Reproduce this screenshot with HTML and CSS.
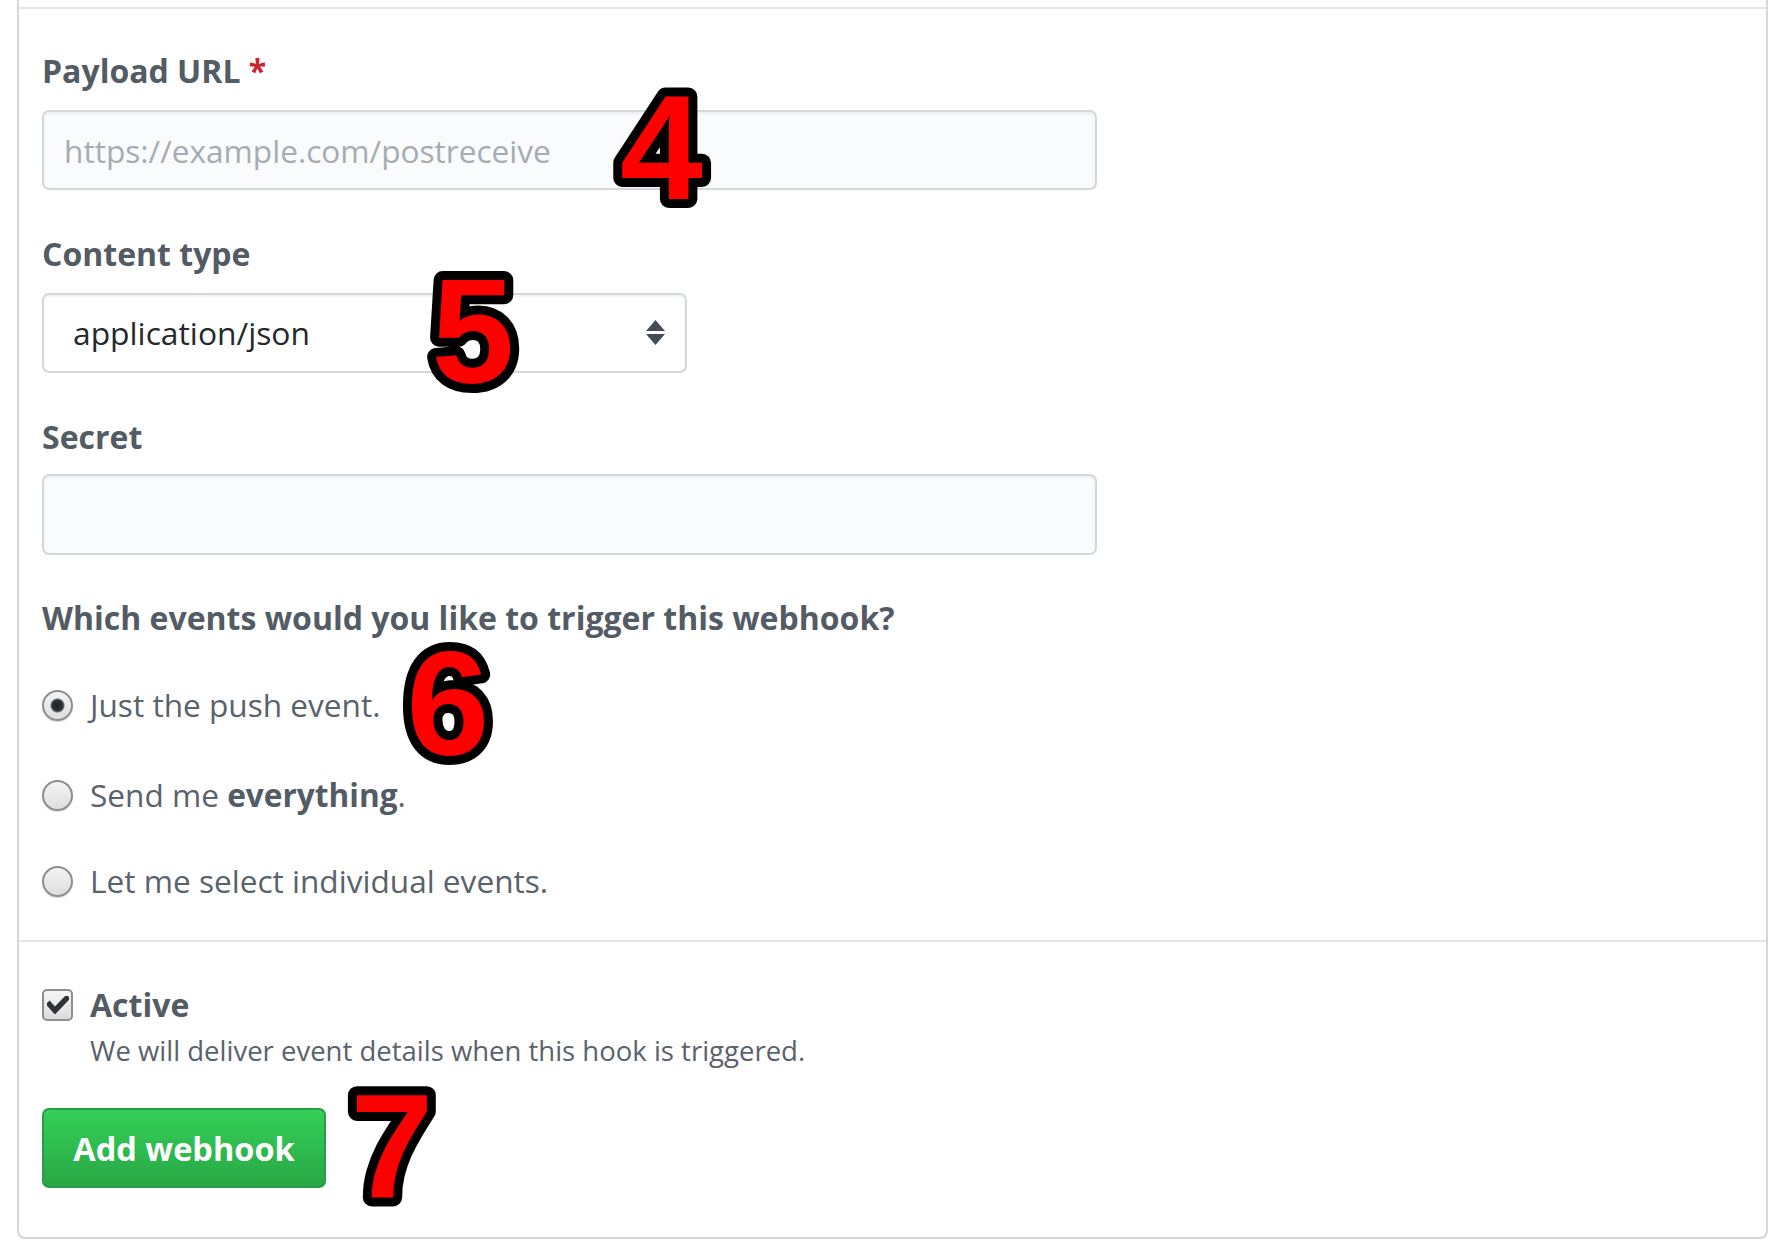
FILE: index.html
```html
<!DOCTYPE html>
<html lang="en">
<head>
<meta charset="utf-8">
<title>Add webhook</title>
<link rel="stylesheet" href="styles.css">
</head>
<body>
<div class="page">
  <div class="box">
    <div class="prev"></div>
    <div class="section main">
      <div class="field">
        <label class="label">Payload URL <span class="req">*</span></label>
        <input class="input" type="text" placeholder="https://example.com/postreceive">
      </div>
      <div class="field">
        <label class="label">Content type</label>
        <div class="select">
          <span class="select-value">application/json</span>
          <svg class="select-arrows" width="19" height="25" viewBox="0 0 19 25">
            <path d="M9.5 0 L19 11 L0 11 Z" fill="#444d56"/>
            <path d="M0 14 L19 14 L9.5 25 Z" fill="#444d56"/>
          </svg>
        </div>
      </div>
      <div class="field">
        <label class="label">Secret</label>
        <input class="input secret" type="text">
      </div>
      <h3 class="label heading">Which events would you like to trigger this webhook?</h3>
      <div class="option opt1">
        <span class="radio checked"></span>
        <span class="option-text">Just the push event.</span>
      </div>
      <div class="option opt2">
        <span class="radio"></span>
        <span class="option-text">Send me <strong>everything</strong>.</span>
      </div>
      <div class="option opt3">
        <span class="radio"></span>
        <span class="option-text">Let me select individual events.</span>
      </div>
    </div>
    <div class="section footer">
      <div class="option active-row">
        <span class="checkbox">
          <svg width="22" height="18" viewBox="0 0 22 18"><path d="M2.5 8.5 L8 14.5 L19.5 2.5" fill="none" stroke="#2f3338" stroke-width="5.5" stroke-linecap="square"/></svg>
        </span>
        <span class="label">Active</span>
      </div>
      <p class="note">We will deliver event details when this hook is triggered.</p>
      <button class="btn" type="button">Add webhook</button>
    </div>
  </div>
  <svg class="marks" width="1792" height="1254" viewBox="0 0 1792 1254">
    <g class="mark">
      <text x="661.5" y="199">4</text>
      <text x="473" y="383">5</text>
      <text x="448" y="755">6</text>
      <text x="392" y="1198">7</text>
    </g>
  </svg>
</div>
</body>
</html>
```
FILE: styles.css
```css
html, body {
  margin: 0;
  padding: 0;
  background: #ffffff;
}

body {
  font-family: "Open Sans", "Noto Sans", sans-serif;
  color: #5a626b;
}

.page {
  position: relative;
  width: 1792px;
  height: 1254px;
  overflow: hidden;
}

.box {
  margin-left: 17px;
  width: 1751px;
  box-sizing: border-box;
  border: 2px solid #d3d6da;
  border-top: none;
  border-radius: 0 0 8px 8px;
}

.prev {
  height: 7px;
  border-bottom: 2px solid #e3e5e8;
}

.section {
  padding-left: 23px;
  padding-right: 23px;
}

.main {
  padding-top: 40px;
  padding-bottom: 37px;
}

.field {
  display: flex;
  flex-direction: column;
  align-items: flex-start;
  margin-bottom: 42px;
}

.label {
  display: block;
  margin: 0;
  font-size: 32px;
  line-height: 44px;
  font-weight: 700;
  color: #535b64;
}

.req {
  color: #cb2431;
}

.input {
  margin-top: 17px;
  width: 1055px;
  height: 80px;
  box-sizing: border-box;
  padding: 0 20px;
  border: 2px solid #d4d7db;
  border-radius: 7px;
  background: #fafbfc;
  box-shadow: inset 0 2px 3px rgba(27, 31, 35, 0.06);
  font-family: "Open Sans", "Noto Sans", sans-serif;
  font-size: 31.6px;
  color: #24292e;
  outline: none;
}

.input::placeholder {
  color: #a6acb3;
}

.secret {
  margin-top: 15px;
  height: 81px;
}

.select {
  margin-top: 17px;
  width: 645px;
  height: 80px;
  box-sizing: border-box;
  padding: 0 20px 0 29px;
  border: 2px solid #d4d7db;
  border-radius: 7px;
  background: #ffffff;
  box-shadow: inset 0 2px 3px rgba(27, 31, 35, 0.05);
  display: flex;
  align-items: center;
  justify-content: space-between;
}

.select-value {
  font-size: 31.8px;
  line-height: 44px;
  color: #24292e;
}

.select-arrows {
  display: block;
  margin-top: -2px;
}

.heading {
  margin-top: -1px;
}

.option {
  display: flex;
  align-items: center;
  gap: 17px;
  height: 44px;
}

.opt1 { margin-top: 43px; }
.opt2 { margin-top: 46px; }
.opt3 { margin-top: 42px; }

.option-text {
  font-size: 31.6px;
  line-height: 44px;
  color: #5a626b;
}

.option-text strong {
  font-weight: 700;
  color: #535b64;
}

.radio {
  flex: none;
  width: 31px;
  height: 31px;
  box-sizing: border-box;
  border-radius: 50%;
  border: 2px solid #8e8e8e;
  background: linear-gradient(#f4f4f4, #dedede);
  box-shadow: 0 1px 1px rgba(0, 0, 0, 0.15);
}

.radio.checked {
  background: radial-gradient(circle at 50% 50%, #1f2226 0, #2b2e33 5px, #6b6e72 6.5px, transparent 7.5px), linear-gradient(#f4f4f4, #dedede);
}

.footer {
  border-top: 2px solid #e3e5e8;
  padding-top: 41px;
  padding-bottom: 49px;
}

.checkbox {
  flex: none;
  width: 31px;
  height: 32px;
  box-sizing: border-box;
  border: 2px solid #8e8e8e;
  border-radius: 5px;
  background: linear-gradient(#f6f6f6, #dcdcdc);
  display: flex;
  align-items: center;
  justify-content: center;
}

.checkbox svg {
  display: block;
}

.note {
  margin: 4px 0 0 48px;
  font-size: 27.5px;
  line-height: 40px;
  color: #5a626b;
}

.btn {
  display: block;
  margin-top: 37px;
  width: 284px;
  height: 80px;
  box-sizing: border-box;
  padding: 2px 0 0;
  border: 2px solid #2a9c45;
  border-radius: 7px;
  background: linear-gradient(#34d058, #28a745);
  font-family: "Open Sans", "Noto Sans", sans-serif;
  font-size: 32.5px;
  line-height: 44px;
  font-weight: 700;
  color: #ffffff;
}

.marks {
  position: absolute;
  left: 0;
  top: 0;
  pointer-events: none;
}

.mark text {
  font-family: "Liberation Sans", Arial, sans-serif;
  font-weight: 700;
  font-size: 149px;
  text-anchor: middle;
  fill: #ff0000;
  stroke: #000000;
  stroke-width: 18px;
  stroke-linejoin: round;
  paint-order: stroke;
}
```
